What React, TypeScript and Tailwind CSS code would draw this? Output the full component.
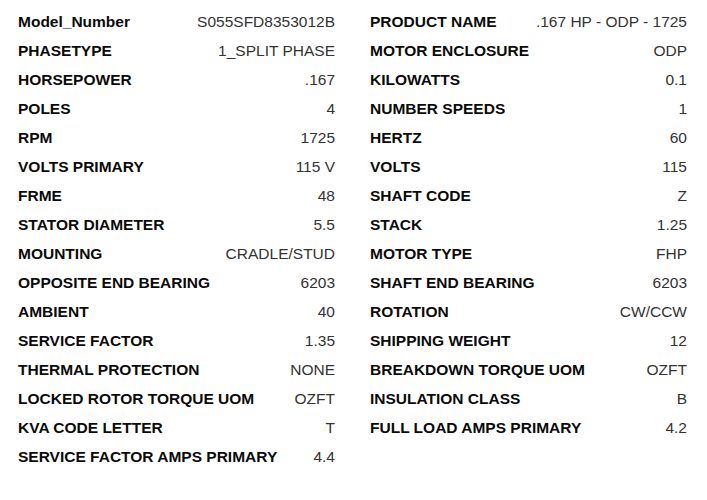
import React from "react";

const left: [string, string][] = [
  ["Model_Number", "S055SFD8353012B"],
  ["PHASETYPE", "1_SPLIT PHASE"],
  ["HORSEPOWER", ".167"],
  ["POLES", "4"],
  ["RPM", "1725"],
  ["VOLTS PRIMARY", "115 V"],
  ["FRME", "48"],
  ["STATOR DIAMETER", "5.5"],
  ["MOUNTING", "CRADLE/STUD"],
  ["OPPOSITE END BEARING", "6203"],
  ["AMBIENT", "40"],
  ["SERVICE FACTOR", "1.35"],
  ["THERMAL PROTECTION", "NONE"],
  ["LOCKED ROTOR TORQUE UOM", "OZFT"],
  ["KVA CODE LETTER", "T"],
  ["SERVICE FACTOR AMPS PRIMARY", "4.4"],
];

const right: [string, string][] = [
  ["PRODUCT NAME", ".167 HP - ODP - 1725"],
  ["MOTOR ENCLOSURE", "ODP"],
  ["KILOWATTS", "0.1"],
  ["NUMBER SPEEDS", "1"],
  ["HERTZ", "60"],
  ["VOLTS", "115"],
  ["SHAFT CODE", "Z"],
  ["STACK", "1.25"],
  ["MOTOR TYPE", "FHP"],
  ["SHAFT END BEARING", "6203"],
  ["ROTATION", "CW/CCW"],
  ["SHIPPING WEIGHT", "12"],
  ["BREAKDOWN TORQUE UOM", "OZFT"],
  ["INSULATION CLASS", "B"],
  ["FULL LOAD AMPS PRIMARY", "4.2"],
];

function Col({ rows }: { rows: [string, string][] }) {
  return (
    <div className="flex w-[317px] flex-col">
      {rows.map(([k, v]) => (
        <div key={k} className="flex h-[29px] items-center justify-between gap-3">
          <span className="text-[15.5px] font-bold text-[#0a0a0a]">{k}</span>
          <span className="text-[15.5px] text-[#333333]">{v}</span>
        </div>
      ))}
    </div>
  );
}

export default function App() {
  return (
    <div
      className="flex h-[500px] w-[707px] gap-[35px] bg-white pl-[18px] pt-[7px]"
      style={{ fontFamily: '"Liberation Sans", Arial, sans-serif' }}
    >
      <Col rows={left} />
      <Col rows={right} />
    </div>
  );
}
